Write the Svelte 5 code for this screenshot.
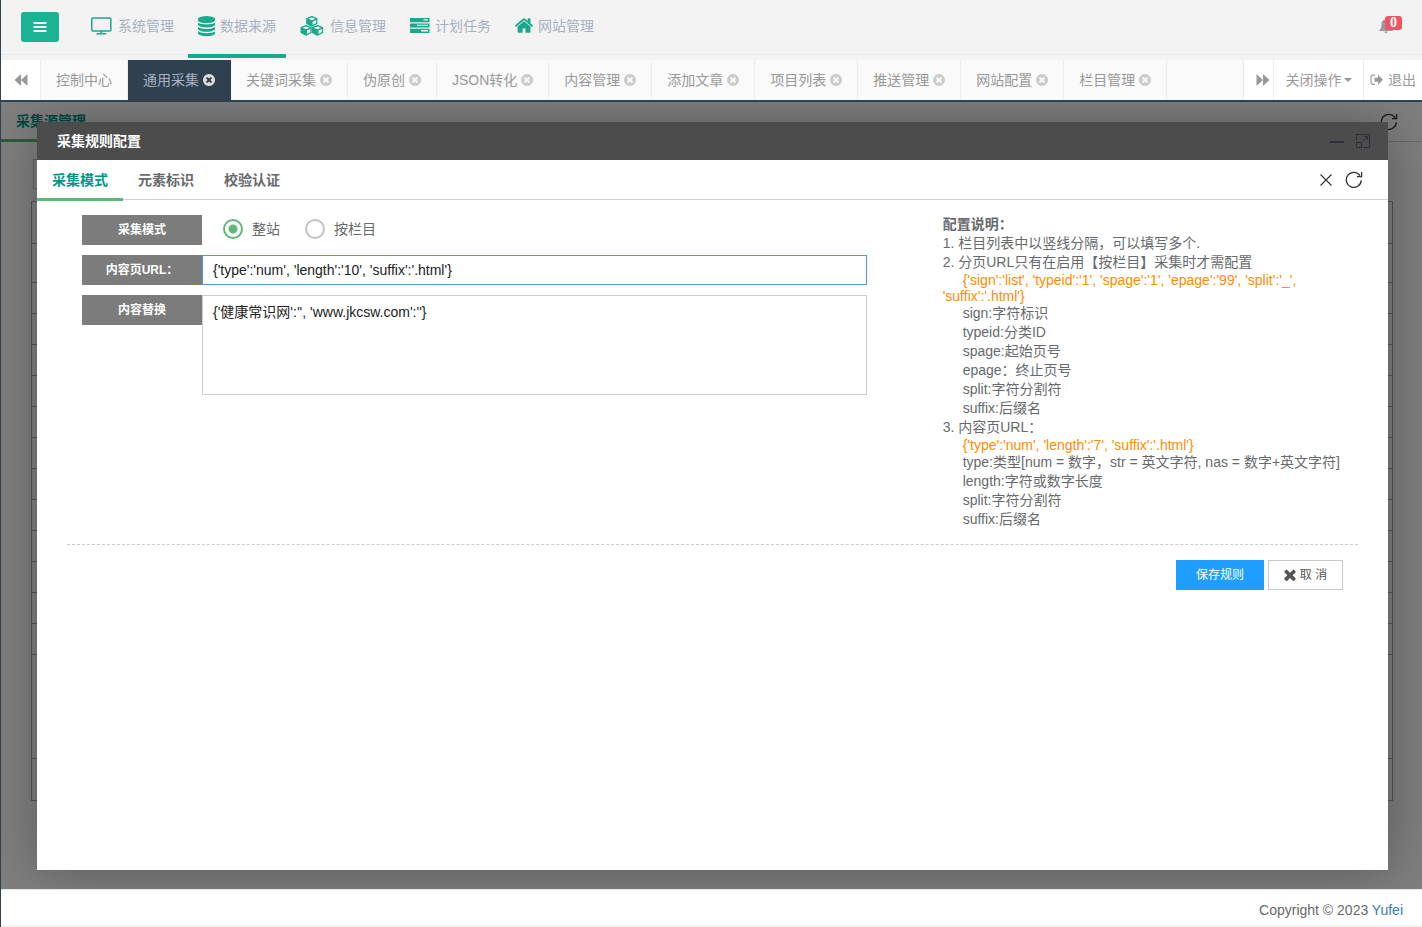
<script lang="ts">
  const menus = [
    { name: "系统管理", icon: "desktop", width: 22 },
    { name: "数据来源", icon: "database", width: 17, active: true },
    { name: "信息管理", icon: "cubes", width: 25 },
    { name: "计划任务", icon: "tasks", width: 20 },
    { name: "网站管理", icon: "home", width: 18 },
  ];
  const pages = [
    "通用采集",
    "关键词采集",
    "伪原创",
    "JSON转化",
    "内容管理",
    "添加文章",
    "项目列表",
    "推送管理",
    "网站配置",
    "栏目管理",
  ];
  const formTabs = ["采集模式", "元素标识", "校验认证"];
  const rows = Array(12).fill(0);

  let current = $state("通用采集");
  let formTab = $state("采集模式");
  let mode = $state("site");
  let url = $state("{'type':'num', 'length':'10', 'suffix':'.html'}");
  let replace = $state("{'健康常识网':'', 'www.jkcsw.com':''}");
</script>

{#snippet refresh()}
  <svg width="18" height="18" viewBox="0 0 18 18" fill="none" stroke="currentColor" stroke-width="1.3">
    <path d="M16.3 9.4A7.5 7.5 0 1 1 15 4.6M16.6 1v4.600H12" />
  </svg>
{/snippet}

{#snippet closeCircle()}
  <svg width="12" height="12" viewBox="128 128 1536 1536" fill="currentColor">
    <path
      d="M1277 1122q0-26-19-45l-181-181 181-181q19-19 19-45 0-27-19-46l-90-90q-19-19-46-19-26 0-45 19l-181 181-181-181q-19-19-45-19-27 0-46 19l-90 90q-19 19-19 46 0 26 19 45l181 181-181 181q-19 19-19 45 0 27 19 46l90 90q19 19 46 19 26 0 45-19l181-181 181 181q19 19 45 19 27 0 46-19l90-90q19-19 19-46zm387-226q0 209-103 385.5t-279.5 279.5-385.5 103-385.5-103-279.5-279.5-103-385.5 103-385.5 279.5-279.5 385.5-103 385.5 103 279.5 279.5 103 385.5z"
    />
  </svg>
{/snippet}

<div class="wrapper">
  <header>
    <button class="toggle" aria-label="菜单">
      <svg width="14" height="12" viewBox="0 0 14 12" fill="currentColor">
        <rect x="0.5" y="1" width="13" height="2" /><rect x="0.5" y="5" width="13" height="2" />
        <rect x="0.5" y="9" width="13" height="2" />
      </svg>
    </button>
    <nav>
      {#each menus as menu}
        <a href="#menu" class:active={menu.active}>
          <svg width={menu.width} height="20" viewBox="0 0 {menu.width} 20" fill="currentColor">
            {#if menu.icon === "desktop"}
              <rect x="0.8" y="2" width="19" height="13" rx="1" fill="none" stroke="currentColor" stroke-width="1.5" />
              <path d="M9.500 15h1.600v2.200H9.500zM5.500 17h9.800v1.400H5.500z" />
            {:else if menu.icon === "database"}
              <path
                transform="translate(-1.500 0) scale(0.0112)"
                d="M896 768q237 0 443-43t325-127v170q0 69-103 128t-280 93.5-385 34.5-385-34.5-280-93.5-103-128v-170q119 84 325 127t443 43zm0 768q237 0 443-43t325-127v170q0 69-103 128t-280 93.5-385 34.5-385-34.5-280-93.5-103-128v-170q119 84 325 127t443 43zm0-384q237 0 443-43t325-127v170q0 69-103 128t-280 93.5-385 34.5-385-34.5-280-93.5-103-128v-170q119 84 325 127t443 43zm0-1152q208 0 385 34.5t280 93.5 103 128v128q0 69-103 128t-280 93.5-385 34.5-385-34.5-280-93.5-103-128v-128q0-69 103-128t280-93.5 385-34.5z"
              />
            {:else if menu.icon === "cubes"}
              {#each [[6, 0.5], [0.3, 9.500], [11.700, 9.500]] as [x, y]}
                <g transform="translate({x} {y})">
                  <path d="M5.800 0l5 2v5l-5 2.600-5-2.600V2z" stroke="currentColor" stroke-width="1.2" stroke-linejoin="round" />
                  <path d="M5.800.9l3.600 1.300-3.600 1.500-3.600-1.500zM6.700 5.100l3.400-1.500v3l-3.400 1.800z" fill="#f3f3f4" />
                </g>
              {/each}
            {:else if menu.icon === "tasks"}
              <path
                fill-rule="evenodd"
                d="M0 2h19.500v4.200H0zM13.500 3.200v1.400H18V3.200zM0 7.400h19.500v4H0zM7 8.700v1h11v-1zM0 12.700h19.500V17H0zM11 14.100v1.400h7v-1.400z"
              />
            {:else}
              <path
                transform="translate(-1 -0.500) scale(0.0112)"
                d="M1472 992v480q0 26-19 45t-45 19h-384v-384h-256v384h-384q-26 0-45-19t-19-45v-480q0-1 .5-3t.5-3l575-474 575 474q1 2 1 6zm223-69l-62 74q-8 9-21 11h-3q-13 0-21-7l-692-577-692 577q-12 8-24 7-13-2-21-11l-62-74q-8-10-7-23.5t11-21.5l719-599q32-26 76-26t76 26l244 204v-195q0-14 9-23t23-9h192q14 0 23 9t9 23v408l219 182q10 8 11 21.5t-7 23.5z"
              />
            {/if}
          </svg>
          {menu.name}
        </a>
      {/each}
    </nav>
    <a class="bell" href="#message" aria-label="消息">
      <svg width="14" height="15" viewBox="0 0 14 15" fill="currentColor">
        <path
          d="M7 .5a1 1 0 0 1 1 1c2.300.5 3.500 2.300 3.500 4.500 0 3.200.7 4.800 2.300 6.200V13H.2v-.8C1.800 10.800 2.500 9.200 2.500 6c0-2.200 1.200-4 3.500-4.500a1 1 0 0 1 1-1zM5.200 13.500h3.600a1.800 1.500 0 0 1-3.600 0z"
        />
      </svg>
      <span class="badge">0</span>
    </a>
  </header>

  <div class="tabs">
    <button class="roll" aria-label="向左">
      <svg width="14" height="14" viewBox="0 0 14 14" fill="currentColor"><path d="M7 1v12L.5 7zM13.500 1v12L7 7z" /></svg>
    </button>
    <div class="tab-list">
      <a href="#home">控制中心</a>
      {#each pages as page}
        <a href="#page" class:active={current === page} onclick={() => (current = page)}>
          {page}{@render closeCircle()}
        </a>
      {/each}
    </div>
    <button class="roll right" aria-label="向右">
      <svg width="14" height="14" viewBox="0 0 14 14" fill="currentColor"><path d="M.5 1v12L7 7zM7 1v12l6.500-6z" /></svg>
    </button>
    <button class="operate">
      关闭操作<svg width="8" height="4" viewBox="0 0 8 4" fill="currentColor"><path d="M0 0h8L4 4z" /></svg>
    </button>
    <a class="exit" href="#logout">
      <svg width="14" height="12" viewBox="0 0 14 12">
        <path d="M5 1.200H2.800A1.800 1.800 0 0 0 1 3v5.500a1.800 1.800 0 0 0 1.800 1.800H5" fill="none" stroke="currentColor" stroke-width="1.2" />
        <path d="M4.500 3.800H8V.8l5 5-5 5v-3H4.500z" fill="currentColor" />
      </svg>
      退出
    </a>
  </div>

  <main>
    <div class="page">
      <div class="page-head">
        <h1>采集源管理</h1>
        {@render refresh()}
      </div>
      <div class="search"></div>
      <div class="grid">
        <div class="bar"></div>
        <div class="thead"></div>
        {#each rows as _}
          <div class="row"></div>
        {/each}
        <div class="blank"></div>
        <div class="bar"></div>
      </div>
    </div>
    <div class="shade"></div>

    <div class="dialog" role="dialog" aria-labelledby="dialog-title">
      <div class="title">
        <h2 id="dialog-title">采集规则配置</h2>
        <button aria-label="最小化">
          <svg width="14" height="14" viewBox="0 0 14 14"><path d="M0 7h14v2H0z" fill="currentColor" /></svg>
        </button>
        <button aria-label="最大化">
          <svg width="14" height="14" viewBox="0 0 14 14" fill="none" stroke="currentColor">
            <path d="M.5 6.500v-6h13v13h-6M.5 8.500h5v5h-5zM6.500 7.500l5-5M8 2.500h3.500V6" />
          </svg>
        </button>
      </div>

      <div class="form-tabs">
        {#each formTabs as tab}
          <button class:active={formTab === tab} onclick={() => (formTab = tab)}>{tab}</button>
        {/each}
        <div class="tools">
          <button aria-label="关闭">
            <svg width="12" height="12" viewBox="0 0 12 12" stroke="currentColor" stroke-width="1.1">
              <path d="M.5.5l11 11M11.500.5l-11 11" />
            </svg>
          </button>
          <button aria-label="刷新">{@render refresh()}</button>
        </div>
      </div>

      <form onsubmit={(e) => e.preventDefault()}>
        <div class="columns">
          <div class="fields">
            <div class="item" role="radiogroup" aria-labelledby="mode-label">
              <span class="label" id="mode-label">采集模式</span>
              <label class="radio"><input type="radio" value="site" bind:group={mode} />整站</label>
              <label class="radio"><input type="radio" value="column" bind:group={mode} />按栏目</label>
            </div>
            <div class="item">
              <label class="label" for="url">内容页URL：</label>
              <input class="text" id="url" type="text" bind:value={url} />
            </div>
            <div class="item">
              <label class="label" for="replace">内容替换</label>
              <textarea id="replace" bind:value={replace}></textarea>
            </div>
          </div>
          <div class="help">
            <b>配置说明：</b>
            <p>1. 栏目列表中以竖线分隔，可以填写多个.</p>
            <p>2. 分页URL只有在启用【按栏目】采集时才需配置</p>
            <p class="code">{"{'sign':'list', 'typeid':'1', 'spage':'1', 'epage':'99', 'split':'_', 'suffix':'.html'}"}</p>
            <p class="sub">sign:字符标识</p>
            <p class="sub">typeid:分类ID</p>
            <p class="sub">spage:起始页号</p>
            <p class="sub">epage：终止页号</p>
            <p class="sub">split:字符分割符</p>
            <p class="sub">suffix:后缀名</p>
            <p>3. 内容页URL：</p>
            <p class="code">{"{'type':'num', 'length':'7', 'suffix':'.html'}"}</p>
            <p class="sub">type:类型[num = 数字，str = 英文字符, nas = 数字+英文字符]</p>
            <p class="sub">length:字符或数字长度</p>
            <p class="sub">split:字符分割符</p>
            <p class="sub">suffix:后缀名</p>
          </div>
        </div>
        <div class="actions">
          <button class="save" type="submit">保存规则</button>
          <button class="cancel" type="button">
            <svg width="12" height="12" viewBox="302 302 1188 1252" fill="currentColor">
              <path
                d="M1490 1322q0 40-28 68l-136 136q-28 28-68 28t-68-28l-294-294-294 294q-28 28-68 28t-68-28l-136-136q-28-28-28-68t28-68l294-294-294-294q-28-28-28-68t28-68l136-136q28-28 68-28t68 28l294 294 294-294q28-28 68-28t68 28l136 136q28 28 28 68t-28 68l-294 294 294 294q28 28 28 68z"
              />
            </svg>
            取 消
          </button>
        </div>
      </form>
    </div>
  </main>

  <footer>Copyright © 2023 <a href="#yufei">Yufei</a></footer>
</div>

<style>
  :global(body) {
    background: #f3f3f4;
  }
  .wrapper,
  .wrapper :global(*) {
    box-sizing: border-box;
  }
  .wrapper {
    display: flex;
    flex-direction: column;
    min-height: 100vh;
    padding-bottom: 2px;
    border-left: 1px solid #2f4050;
    font: 14px/20px "Liberation Sans", "Noto Sans CJK SC", sans-serif;
    color: #676a6c;
  }
  a {
    text-decoration: none;
  }
  button,
  input,
  textarea {
    margin: 0;
    font: inherit;
  }
  button {
    display: flex;
    align-items: center;
    justify-content: center;
    padding: 0;
    border: 0;
    background: none;
    color: inherit;
    cursor: pointer;
  }
  svg {
    flex: none;
  }
  header {
    display: flex;
    height: 55px;
    margin-bottom: 5px;
    padding: 0 20px;
    border-bottom: 1px solid #e7eaec;
  }
  .toggle {
    width: 38px;
    height: 30px;
    margin: 12px 22px 0 0;
    border-radius: 3px;
    background: #1ab394;
    color: #fff;
  }
  nav {
    display: flex;
    flex: 1;
    gap: 4px;
  }
  nav a {
    display: flex;
    align-items: center;
    gap: 5px;
    height: 58px;
    padding: 0 10px 6px;
    color: #a7b1c2;
  }
  nav a.active {
    padding-bottom: 2px;
    border-bottom: 4px solid #19aa8d;
  }
  nav svg {
    color: #19aa8d;
  }
  .bell {
    position: relative;
    width: 23px;
    padding-top: 18px;
    color: #999c9e;
  }
  .badge {
    position: absolute;
    top: 16px;
    right: 0;
    width: 17px;
    height: 14px;
    border-radius: 3px;
    background: #ed5565;
    color: #fff;
    font: bold 14px/14px "Liberation Serif", serif;
    text-align: center;
  }
  .tabs {
    display: flex;
    height: 42px;
    border-bottom: 2px solid #2f4050;
    background: #fff;
    color: #999;
  }
  .roll {
    width: 40px;
    border-right: 1px solid #eee;
  }
  .roll.right {
    width: 31px;
    padding-left: 8px;
    border-left: 1px solid #eee;
  }
  .tab-list {
    display: flex;
    flex: 1;
    overflow: hidden;
    background: #fafafa;
  }
  .tab-list a {
    display: flex;
    flex: none;
    align-items: center;
    gap: 4px;
    padding: 0 15px;
    border-right: 1px solid #eee;
    color: #999;
  }
  .tab-list svg {
    color: #ccc;
  }
  .tab-list a.active {
    border-color: #2f4050;
    background: #2f4050;
    color: #a7b1c2;
  }
  .tab-list .active svg {
    color: #ddd;
  }
  .operate {
    gap: 2px;
    width: 90px;
    border-right: 1px solid #eee;
  }
  .exit {
    display: flex;
    align-items: center;
    gap: 4px;
    width: 58px;
    padding-left: 6px;
    color: #999;
    white-space: nowrap;
  }
  main {
    position: relative;
    flex: 1;
    overflow: hidden;
    background: #fff;
  }
  .page-head {
    display: flex;
    align-items: center;
    justify-content: space-between;
    height: 40px;
    padding-right: 24px;
    border-bottom: 1px solid #d2d2d2;
    color: #333;
  }
  h1,
  h2 {
    margin: 0;
    font-size: 14px;
  }
  h1 {
    height: 41px;
    padding: 0 15px;
    border-bottom: 3px solid #5fb878;
    color: #009688;
    line-height: 40px;
  }
  .search {
    width: 200px;
    height: 30px;
    margin: 17px 32px 12px;
    border: 1px solid #c9c9c9;
  }
  .grid {
    margin: 0 29px 88px 30px;
    border: 1px solid #aaa;
    border-bottom: 0;
  }
  .grid div {
    border-bottom: 1px solid #aaa;
  }
  .bar {
    height: 42px;
  }
  .thead {
    height: 39px;
  }
  .row {
    height: 31px;
  }
  .blank {
    height: 104px;
  }
  .shade {
    position: absolute;
    inset: 0;
    background: rgba(0, 0, 0, 0.5);
  }
  .dialog {
    position: absolute;
    inset: 20px 34px 19px 36px;
    background: #fff;
    box-shadow: 1px 1px 50px rgba(0, 0, 0, 0.3);
  }
  .title {
    display: flex;
    align-items: center;
    gap: 12px;
    height: 38px;
    padding: 0 18px 0 20px;
    background: #4b4c4b;
    color: #2e2d3c;
  }
  h2 {
    flex: 1;
    color: #fff;
  }
  .form-tabs {
    display: flex;
    height: 40px;
    border-bottom: 1px solid #d2d2d2;
  }
  .form-tabs > button {
    height: 41px;
    padding: 0 15px;
    border-bottom: 3px solid transparent;
    border-top: 1px solid transparent;
    font-weight: bold;
  }
  .form-tabs > button.active {
    border-bottom-color: #5fb878;
    color: #009688;
  }
  .tools {
    display: flex;
    gap: 13px;
    margin-left: auto;
    padding-right: 25px;
    color: #333;
  }
  form {
    padding: 15px 30px;
  }
  .columns {
    display: grid;
    grid-template-columns: 2fr 1fr;
    padding-bottom: 15px;
    border-bottom: 1px dashed #ccc;
  }
  .fields {
    display: flex;
    flex-direction: column;
    gap: 10px;
    padding: 0 61px 0 15px;
  }
  .item {
    display: flex;
  }
  .label {
    flex: none;
    width: 120px;
    height: 30px;
    background: #7b7c7b;
    color: #fff;
    font-size: 12px;
    font-weight: bold;
    line-height: 30px;
    text-align: center;
  }
  .radio {
    display: flex;
    align-items: center;
    gap: 9px;
    height: 28px;
    margin: 0 4px 0 21px;
  }
  .radio input {
    width: 20px;
    height: 20px;
    border: 2px solid #c2c2c2;
    border-radius: 50%;
    appearance: none;
  }
  .radio input:checked {
    border-color: #5fb878;
    background: radial-gradient(circle, #5fb878 4px, transparent 5px);
  }
  .text,
  textarea {
    flex: 1;
    min-width: 0;
    border: 1px solid #ccc;
    border-radius: 0;
    background: #fff;
    color: #222;
    outline: 0;
  }
  .text {
    height: 30px;
    padding: 0 10px;
    border-color: #5097f5;
  }
  textarea {
    height: 100px;
    padding: 6px 10px;
    resize: none;
  }
  .help {
    padding: 0 15px;
    line-height: 19px;
  }
  .help b {
    display: block;
  }
  .help p {
    margin: 0;
  }
  .help .code {
    color: #ff8c00;
    line-height: 16px;
    text-indent: 20px;
  }
  .help .sub {
    padding-left: 20px;
    white-space: nowrap;
  }
  .actions {
    display: flex;
    justify-content: flex-end;
    gap: 4px;
    padding: 15px;
  }
  .actions button {
    height: 30px;
    font-size: 12px;
  }
  .save {
    width: 88px;
    background: #1e9fff;
    color: #fff;
  }
  .cancel {
    gap: 4px;
    width: 75px;
    border: 1px solid #c9c9c9;
    background: #fff;
    color: #555;
  }
  footer {
    height: 36px;
    padding: 10px 19px 5px;
    border-top: 1px solid #e7eaec;
    background: #fff;
    text-align: right;
  }
  footer a {
    color: #337ab7;
  }
</style>
